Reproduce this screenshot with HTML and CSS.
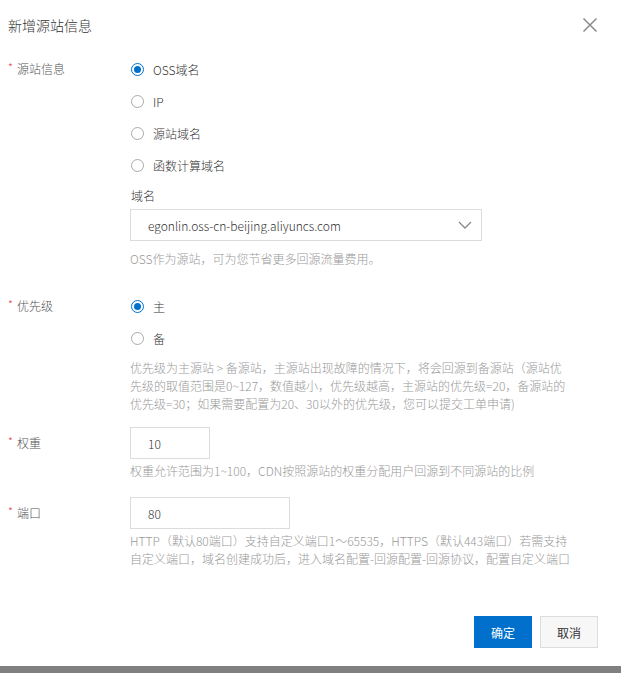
FILE: index.html
```html
<!DOCTYPE html>
<html lang="zh-CN">
<head>
<meta charset="utf-8">
<title>新增源站信息</title>
<link rel="stylesheet" href="styles.css">
</head>
<body>
<div class="dialog">
  <div class="header">
    <div class="title">新增源站信息</div>
    <svg class="close" width="16" height="16" viewBox="0 0 16 16"><path d="M1.5 1.5 L14.5 14.5 M14.5 1.5 L1.5 14.5" stroke="#8a8a8a" stroke-width="1.5" fill="none"/></svg>
  </div>

  <div class="form">
    <div class="item item-origin">
      <div class="label"><span class="req">*</span>源站信息</div>
      <div class="content">
        <div class="radio"><span class="dot checked"></span>OSS域名</div>
        <div class="radio"><span class="dot"></span>IP</div>
        <div class="radio"><span class="dot"></span>源站域名</div>
        <div class="radio"><span class="dot"></span>函数计算域名</div>
        <div class="sublabel">域名</div>
        <div class="select">
          <span>egonlin.oss-cn-beijing.aliyuncs.com</span>
          <svg width="14" height="8" viewBox="0 0 14 8"><path d="M1 1 L7 7 L13 1" stroke="#888" stroke-width="1.3" fill="none"/></svg>
        </div>
        <div class="help help-first">OSS作为源站，可为您节省更多回源流量费用。</div>
      </div>
    </div>

    <div class="item item-priority">
      <div class="label"><span class="req">*</span>优先级</div>
      <div class="content">
        <div class="radio"><span class="dot checked"></span>主</div>
        <div class="radio"><span class="dot"></span>备</div>
        <div class="help help-prio">优先级为主源站 &gt; 备源站，主源站出现故障的情况下，将会回源到备源站（源站优<br>先级的取值范围是0~127，数值越小，优先级越高，主源站的优先级=20，备源站的<br>优先级=30；如果需要配置为20、30以外的优先级，您可以提交工单申请)</div>
      </div>
    </div>

    <div class="item item-weight">
      <div class="label input-label"><span class="req">*</span>权重</div>
      <div class="content">
        <div class="input short">10</div>
        <div class="help help-weight">权重允许范围为1~100，CDN按照源站的权重分配用户回源到不同源站的比例</div>
      </div>
    </div>

    <div class="item item-port">
      <div class="label input-label"><span class="req">*</span>端口</div>
      <div class="content">
        <div class="input long">80</div>
        <div class="help help-weight">HTTP（默认80端口）支持自定义端口1～65535，HTTPS（默认443端口）若需支持<br>自定义端口，域名创建成功后，进入域名配置-回源配置-回源协议，配置自定义端口</div>
      </div>
    </div>
  </div>

  <div class="footer">
    <button class="btn primary">确定</button>
    <button class="btn">取消</button>
  </div>
</div>
<div class="bottom-bar"></div>
</body>
</html>
```

FILE: styles.css
```css
* { box-sizing: border-box; }
html, body { margin: 0; padding: 0; background: #fff; }
body {
  font-family: "Noto Sans CJK SC", "Noto Sans", sans-serif;
  font-size: 12px;
  font-weight: 300;
  color: #333;
  width: 621px;
  height: 673px;
  overflow: hidden;
  display: flex;
  flex-direction: column;
}
.dialog {
  flex: 1;
  display: flex;
  flex-direction: column;
}
.header {
  height: 53px;
  display: flex;
  align-items: flex-start;
  justify-content: space-between;
  padding: 0 23px 0 8px;
}
.title {
  font-size: 14px;
  line-height: 18px;
  margin-top: 16px;
  color: #333;
}
.close { margin-top: 17px; }

.form { display: flex; flex-direction: column; }
.item { display: flex; }
.label {
  width: 130px;
  flex: none;
  padding-left: 8px;
  line-height: 32px;
  height: 32px;
  color: #555;
  display: flex;
  align-items: center;
}
.req {
  color: #e84a4a;
  font-size: 11px;
  width: 9px;
  position: relative;
  top: -2px;
}
.content { display: flex; flex-direction: column; }
.radio {
  height: 32px;
  display: flex;
  align-items: center;
  color: #333;
  padding-left: 1px;
}
.dot {
  width: 13px;
  height: 13px;
  border: 1px solid #aaa;
  border-radius: 50%;
  margin-right: 9px;
  position: relative;
  background: #fff;
}
.dot.checked { border-color: #0070cc; }
.dot.checked::after {
  content: "";
  position: absolute;
  left: 2px; top: 2px;
  width: 7px; height: 7px;
  border-radius: 50%;
  background: #0070cc;
}
.sublabel {
  margin-top: 6px;
  line-height: 18px;
  color: #333;
  padding-left: 1px;
}
.select {
  margin-top: 4px;
  width: 352px;
  height: 32px;
  border: 1px solid #dcdcdc;
  display: flex;
  align-items: center;
  justify-content: space-between;
  padding: 0 9px 0 17px;
  color: #333;
}
.help {
  color: #999;
  line-height: 18px;
  white-space: nowrap;
}
.help-first { margin-top: 9px; }
.help-prio { margin-top: 5px; }
.help-weight { margin-top: 3px; }
.item-priority { margin-top: 22px; }
.item-weight { margin-top: 14px; }
.item-port { margin-top: 17px; }
.input {
  height: 32px;
  border: 1px solid #dcdcdc;
  display: flex;
  align-items: center;
  padding-left: 17px;
  color: #333;
}
.input.short { width: 80px; }
.input.long { width: 160px; }

.footer {
  margin-top: 48px;
  display: flex;
  justify-content: flex-end;
  gap: 8px;
  padding-right: 23px;
}
.btn {
  width: 58px;
  height: 32px;
  font-family: inherit;
  font-size: 12px;
  font-weight: 400;
  border: 1px solid #ddd;
  background: #f7f7f7;
  color: #333;
  padding: 0;
}
.btn.primary {
  background: #0070cc;
  border-color: #0070cc;
  color: #fff;
}
.bottom-bar {
  height: 7px;
  background: #808080;
}
```
